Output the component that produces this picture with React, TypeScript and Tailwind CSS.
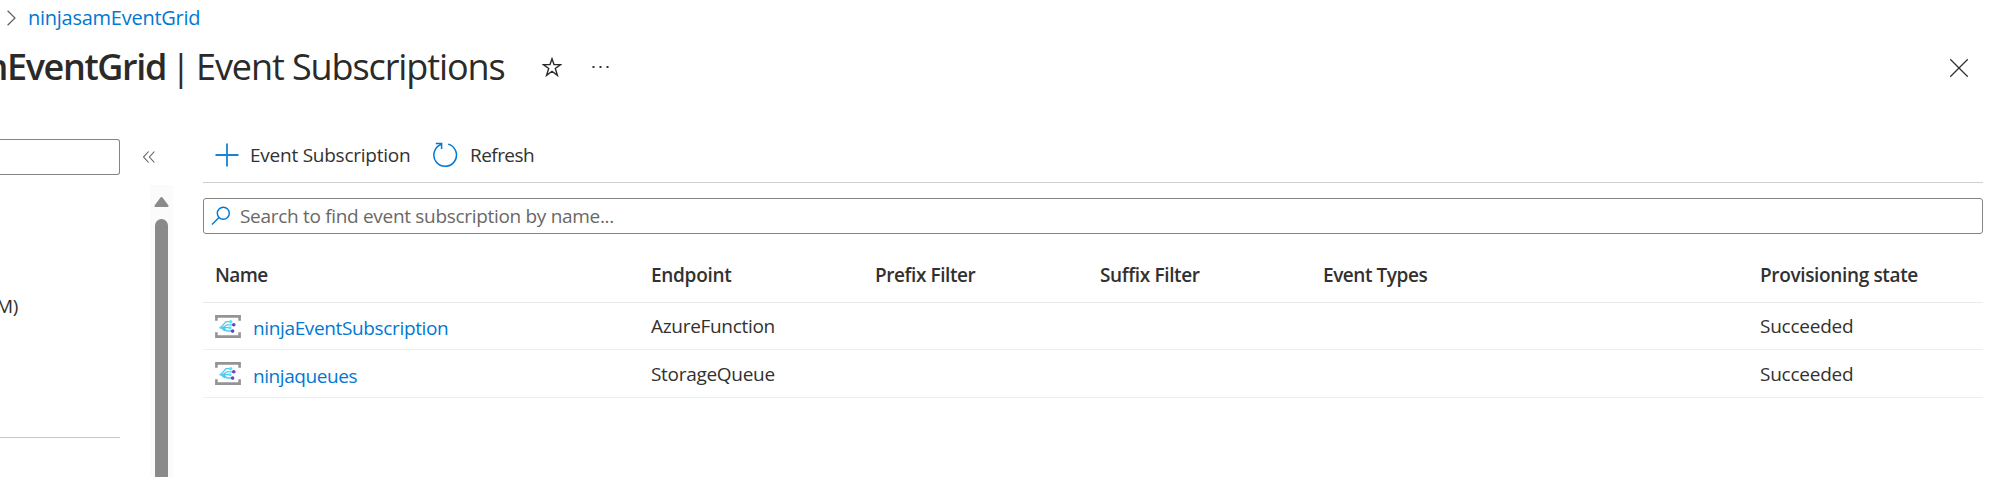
type IconProps = { className?: string };

const Star = ({ className }: IconProps) => (
  <svg viewBox="0 0 20 20" className={className} fill="none" stroke="#2b2a29" strokeWidth="1.4">
    <path d="M10 1.8 12 7.6H18.6L13.3 11.5 15.4 18.4 10 14.3 4.6 18.4 6.7 11.5 1.4 7.6H8Z" />
  </svg>
);

const Dots = ({ className }: IconProps) => (
  <svg viewBox="0 0 17 4" className={className} fill="#323130">
    <rect x="0.5" y="1" width="2" height="2" />
    <rect x="7.5" y="1" width="2" height="2" />
    <rect x="14.5" y="1" width="2" height="2" />
  </svg>
);

const Close = ({ className }: IconProps) => (
  <svg viewBox="0 0 18 18" className={className} fill="none" stroke="#323130" strokeWidth="1.3">
    <path d="M0.3 0.3 17.7 17.7M17.7 0.3 0.3 17.7" />
  </svg>
);

const Chevron = ({ className }: IconProps) => (
  <svg viewBox="0 0 9 16" className={className} fill="none" stroke="#605e5c" strokeWidth="1.2">
    <path d="M0.6 0.8 8 8 0.6 15.2" />
  </svg>
);

const Collapse = ({ className }: IconProps) => (
  <svg viewBox="0 0 12 12" className={className} fill="none" stroke="#605e5c" strokeWidth="1.1">
    <path d="M5.6 0.5 0.6 6 5.6 11.5M11.4 0.5 6.4 6 11.4 11.5" />
  </svg>
);

const Plus = ({ className }: IconProps) => (
  <svg viewBox="0 0 24 24" className={className} fill="none" stroke="#1683d8" strokeWidth="1.8">
    <path d="M12 0.5V23.5M0.5 12H23.5" />
  </svg>
);

const Refresh = ({ className }: IconProps) => (
  <svg viewBox="0 0 26 26" className={className} fill="none" stroke="#0078d4" strokeWidth="1.5">
    <path d="M16.2 2.1A11.3 11.3 0 1 1 9.2 2.4M3.8 1.4H9.6V7" />
  </svg>
);

const Search = ({ className }: IconProps) => (
  <svg viewBox="0 0 20 20" className={className} fill="none" stroke="#0078d4" strokeWidth="1.4">
    <circle cx="12.3" cy="7.2" r="6" />
    <path d="M8 11.6 1 18.6" />
  </svg>
);

const EventIcon = ({ className }: IconProps) => (
  <svg viewBox="0 0 26 23" className={className} fill="none">
    <path d="M1.4 5.8V1.4H24.6V5.8M1.4 17.2V21.6H24.6V17.2" stroke="#949494" strokeWidth="2.6" />
    <path d="M5 12.6H8L12 9.8H18M8 12.6H15M6 12.4 11 6.6H15.5M8 12.6 12 16H17M6 12.8 10 16" stroke="#50c8ea" strokeWidth="1.3" />
    <circle cx="15.7" cy="6.7" r="1.7" fill="#50e6ff" />
    <circle cx="15" cy="12.7" r="1.5" fill="#50e6ff" />
    <circle cx="5.2" cy="12.6" r="1.1" fill="#50e6ff" />
    <circle cx="18.8" cy="9.7" r="1.8" fill="#6b43c0" />
    <circle cx="17.6" cy="16.1" r="1.8" fill="#6b43c0" />
  </svg>
);

const columns = [
  { label: "Name", tracking: "tracking-[-0.6px]" },
  { label: "Endpoint", tracking: "tracking-[-0.3px]" },
  { label: "Prefix Filter", tracking: "tracking-[-0.42px]" },
  { label: "Suffix Filter", tracking: "tracking-[-0.36px]" },
  { label: "Event Types", tracking: "tracking-[-0.45px]" },
  { label: "Provisioning state", tracking: "tracking-[-0.35px]" },
];

const subscriptions = [
  { name: "ninjaEventSubscription", tracking: "tracking-[-0.36px]", endpoint: "AzureFunction", state: "Succeeded" },
  { name: "ninjaqueues", tracking: "tracking-[-0.42px]", endpoint: "StorageQueue", state: "Succeeded" },
];

const grid = "grid grid-cols-[436px_224px_225px_223px_437px_1fr] pl-3";

export default function App() {
  return (
    <div className="flex h-[477px] w-[1996px] flex-col overflow-hidden bg-white font-['Open_Sans','Noto_Sans',sans-serif] text-[19px] text-[#323130]">
      <nav className="flex h-[35px] shrink-0 items-center pl-[7px]">
        <Chevron className="h-4 w-[9px]" />
        <a className="ml-3 text-[20px] tracking-[-0.26px] text-[#0078d4]">ninjasamEventGrid</a>
      </nav>

      <header className="flex h-[93px] shrink-0 items-start justify-between pr-[28px]">
        <div className="flex h-16 items-center">
          <h1 className="flex whitespace-pre text-[36px] text-[#2b2a29]">
            <span className="flex w-[166px] justify-end font-semibold tracking-[-1.36px]">ninjasamEventGrid</span>
            <span className="w-[30px] text-center">|</span>
            <span className="tracking-[-1.09px]">Event Subscriptions</span>
          </h1>
          <Star className="ml-[37px] h-5 w-5" />
          <Dots className="ml-[30px] h-1 w-[17px]" />
        </div>
        <Close className="mt-6 h-[18px] w-[18px]" />
      </header>

      <div className="flex min-h-0 flex-1">
        <aside className="flex w-[173px] shrink-0">
          <div className="flex w-[120px] shrink-0 flex-col">
            <div className="mt-[11px] h-9 shrink-0 rounded-r-[3px] border border-l-0 border-[#868482]" />
            <div className="mt-[117px] flex h-[28px] w-[18px] items-center justify-end tracking-[-0.3px]">M)</div>
            <div className="mt-[117px] h-px bg-[#c8c6c4]" />
          </div>
          <div className="flex flex-1 flex-col items-end">
            <div className="flex h-[57px] w-full shrink-0 pl-[23px] pt-[23px]">
              <Collapse className="h-3 w-3" />
            </div>
            <div className="flex w-[23px] flex-1 flex-col items-center bg-[#fbfbfb] pt-3">
              <svg viewBox="0 0 15 10" className="h-[10px] w-[15px]">
                <path d="M6.3 0.7Q7.5-.5 8.7.7L14.5 8.6Q14.8 10 13.5 10H1.5Q.2 10 .5 8.6Z" fill="#8a8a8a" />
              </svg>
              <div className="mt-3 w-[13px] flex-1 rounded-t-full bg-[#8a8a8a]" />
            </div>
          </div>
        </aside>

        <main className="ml-[30px] mr-[13px] flex flex-1 flex-col">
          <div className="flex h-[55px] shrink-0 items-center border-b border-[#d2d0ce] pl-3">
            <Plus className="h-6 w-6" />
            <span className="ml-[11px] mt-px w-[160px] whitespace-nowrap tracking-[-0.24px]">Event Subscription</span>
            <Refresh className="ml-[22px] h-[26px] w-[26px]" />
            <span className="ml-3 mt-px tracking-[-0.55px]">Refresh</span>
          </div>

          <div className="mt-[15px] flex h-9 shrink-0 items-center rounded-[3px] border border-[#868482] pl-[7px]">
            <Search className="h-5 w-5" />
            <span className="ml-[9px] tracking-[-0.31px] text-[#6a6866]">Search to find event subscription by name...</span>
          </div>

          <div className={`${grid} h-[69px] shrink-0 items-center border-b border-[#eaeaea] pt-[14px] font-semibold`}>
            {columns.map((c) => (
              <div key={c.label} className={c.tracking}>{c.label}</div>
            ))}
          </div>

          {subscriptions.map((s, i) => (
            <div key={s.name} className={`${grid} ${i === 0 ? "h-[47px]" : "h-[48px]"} shrink-0 items-center border-b border-[#eeeeee]`}>
              <div className="flex items-center">
                <EventIcon className="h-[23px] w-[26px]" />
                <a className={`ml-3 mt-[5px] text-[#0078d4] ${s.tracking}`}>{s.name}</a>
              </div>
              <div className="col-span-4 mt-px tracking-[-0.3px]">{s.endpoint}</div>
              <div className="mt-px tracking-[-0.24px]">{s.state}</div>
            </div>
          ))}
        </main>
      </div>
    </div>
  );
}
